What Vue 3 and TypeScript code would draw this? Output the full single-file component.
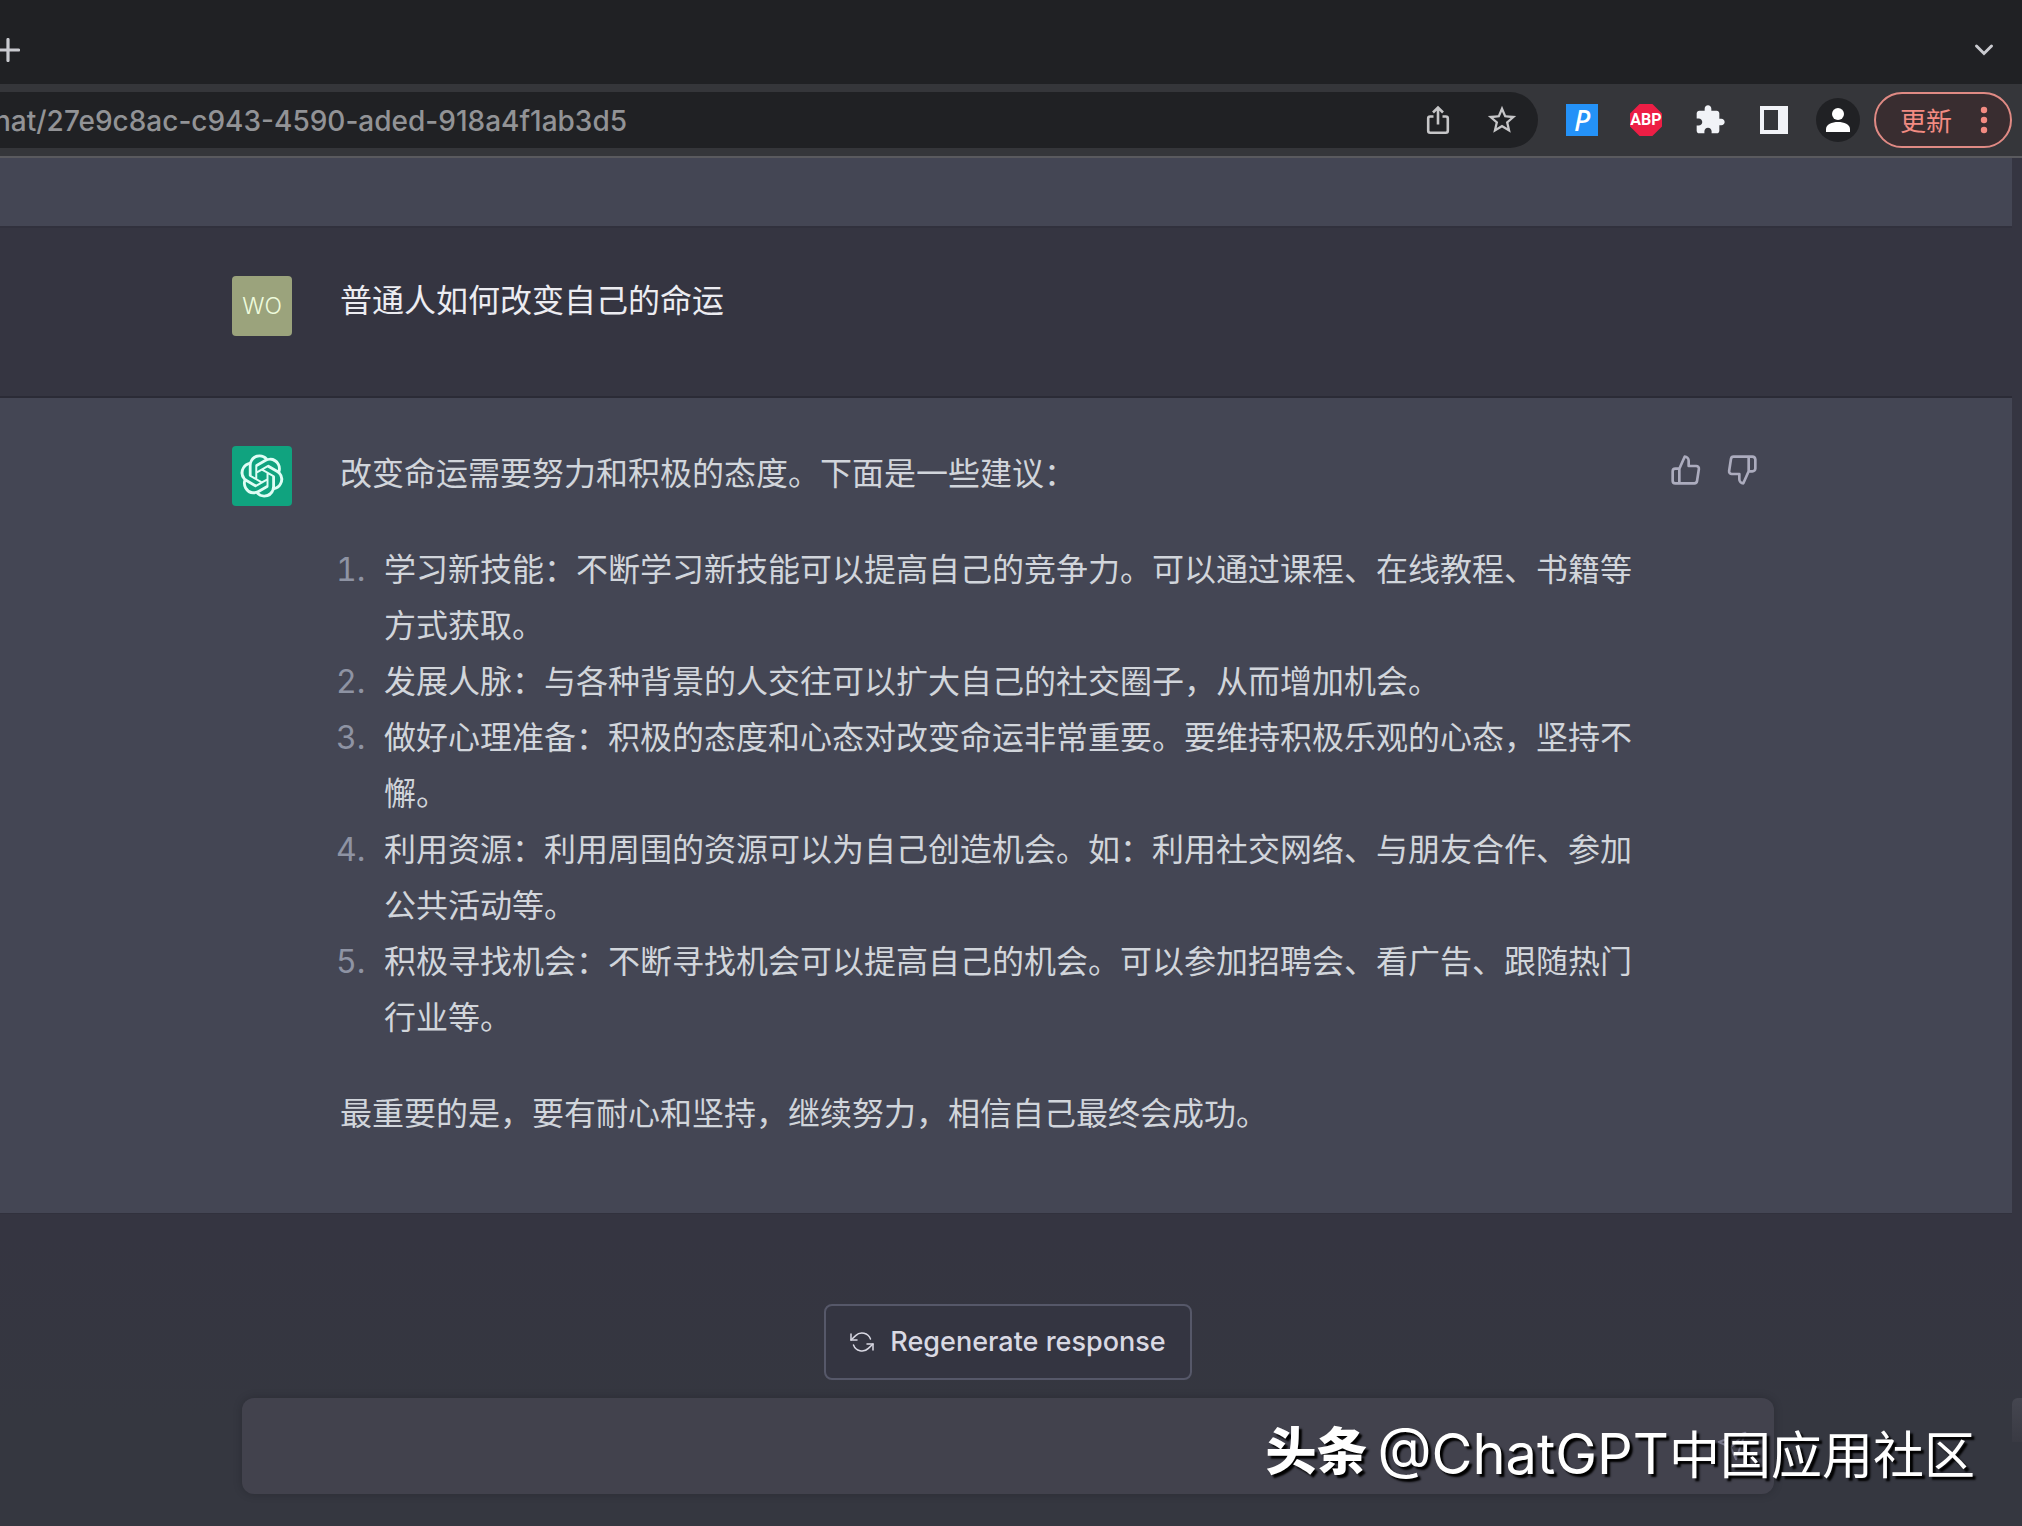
<script setup lang="ts">
import { ref } from 'vue'

interface Tip {
  id: number
  text: string
}

const url = ref('hat/27e9c8ac-c943-4590-aded-918a4f1ab3d5')
const draft = ref('')

const question = '普通人如何改变自己的命运'
const intro = '改变命运需要努力和积极的态度。下面是一些建议：'
const tips: Tip[] = [
  { id: 1, text: '学习新技能：不断学习新技能可以提高自己的竞争力。可以通过课程、在线教程、书籍等方式获取。' },
  { id: 2, text: '发展人脉：与各种背景的人交往可以扩大自己的社交圈子，从而增加机会。' },
  { id: 3, text: '做好心理准备：积极的态度和心态对改变命运非常重要。要维持积极乐观的心态，坚持不懈。' },
  { id: 4, text: '利用资源：利用周围的资源可以为自己创造机会。如：利用社交网络、与朋友合作、参加公共活动等。' },
  { id: 5, text: '积极寻找机会：不断寻找机会可以提高自己的机会。可以参加招聘会、看广告、跟随热门行业等。' },
]
const outro = '最重要的是，要有耐心和坚持，继续努力，相信自己最终会成功。'
</script>

<template>
  <div class="window">
    <header class="tabs">
      <button class="bare plus" aria-label="New tab">
        <svg width="24" height="24" viewBox="0 0 24 24"><path d="M12 1.5v21M1.500 12h21" stroke="#c9cacf" stroke-width="3.200" stroke-linecap="round" /></svg>
      </button>
      <button class="bare" aria-label="Search tabs">
        <svg width="20" height="14" viewBox="0 0 20 14"><path d="M2.500 3l7.500 7.500L17.500 3" fill="none" stroke="#c9cacf" stroke-width="3" stroke-linecap="round" /></svg>
      </button>
    </header>

    <nav class="toolbar">
      <div class="omnibox">
        <input v-model="url" class="url" aria-label="Address" spellcheck="false" />
        <button class="bare" aria-label="Share">
          <svg width="32" height="32" viewBox="0 0 32 32" fill="none" stroke="#c6c6c8" stroke-width="2.600">
            <path d="M11.500 12.500H8.200a2 2 0 0 0-2 2v12.300a2 2 0 0 0 2 2h15.600a2 2 0 0 0 2-2V14.500a2 2 0 0 0-2-2h-3.300M16 20.500V4M11 8.500l5-5 5 5" />
          </svg>
        </button>
        <button class="bare" aria-label="Bookmark">
          <svg width="34" height="34" viewBox="0 0 24 24" fill="#c6c6c8">
            <path d="M22 9.240l-7.190-.620L12 2 9.190 8.630 2 9.240l5.460 4.730L5.820 21 12 17.270 18.180 21l-1.630-7.030L22 9.240zM12 15.400l-3.760 2.270 1-4.280-3.320-2.880 4.380-.380L12 6.100l1.710 4.040 4.380.380-3.320 2.880 1 4.280L12 15.400z" />
          </svg>
        </button>
      </div>
      <div class="extensions">
        <button class="bare ext-p" aria-label="P extension">P</button>
        <button class="bare ext-abp" aria-label="Adblock Plus">ABP</button>
        <button class="bare" aria-label="Extensions">
          <svg width="32" height="32" viewBox="0 0 24 24" fill="#f1f3f7">
            <path d="M20.500 11H19V7c0-1.100-.900-2-2-2h-4V3.500C13 2.120 11.880 1 10.500 1S8 2.120 8 3.500V5H4c-1.100 0-1.990.900-1.990 2v3.800H3.500c1.490 0 2.700 1.210 2.700 2.700s-1.210 2.700-2.700 2.700H2V20c0 1.100.900 2 2 2h3.800v-1.500c0-1.490 1.210-2.700 2.700-2.700s2.700 1.210 2.700 2.700V22H17c1.100 0 2-.900 2-2v-4h1.500c1.380 0 2.500-1.120 2.500-2.500S21.880 11 20.500 11z" />
          </svg>
        </button>
        <button class="bare" aria-label="Side panel">
          <svg width="32" height="32" viewBox="0 0 32 32"><path d="M2 2h28v28H2zM6 6v20h14V6z" fill="#f1f3f7" fill-rule="evenodd" /></svg>
        </button>
      </div>
      <button class="bare profile" aria-label="Profile">
        <svg width="44" height="44" viewBox="0 0 44 44" fill="#fff">
          <circle cx="22" cy="16" r="6" />
          <path d="M10 34v-3c0-4.500 6-7 12-7s12 2.500 12 7v3z" />
        </svg>
      </button>
      <button class="update">
        更新
        <svg width="8" height="28" viewBox="0 0 8 28" fill="#f28b82"><circle cx="4" cy="4" r="3.200" /><circle cx="4" cy="14" r="3.200" /><circle cx="4" cy="24" r="3.200" /></svg>
      </button>
    </nav>

    <main class="page">
      <div class="scroller">
        <section class="previous"></section>

        <section class="row user">
          <div class="column">
            <div class="avatar me">WO</div>
            <p class="content">{{ question }}</p>
          </div>
        </section>

        <section class="row bot">
          <div class="column">
            <div class="avatar gpt">
              <svg width="44" height="44" viewBox="0 0 41 41" fill="none" stroke-width="1.500">
                <path d="M37.532 16.870a9.963 9.963 0 0 0-.856-8.184 10.078 10.078 0 0 0-10.855-4.835A9.964 9.964 0 0 0 18.306.500a10.079 10.079 0 0 0-9.614 6.977 9.967 9.967 0 0 0-6.664 4.834 10.080 10.080 0 0 0 1.240 11.817 9.965 9.965 0 0 0 .856 8.185 10.079 10.079 0 0 0 10.855 4.835 9.965 9.965 0 0 0 7.516 3.350 10.078 10.078 0 0 0 9.617-6.981 9.967 9.967 0 0 0 6.663-4.834 10.079 10.079 0 0 0-1.243-11.813zM22.498 37.886a7.474 7.474 0 0 1-4.799-1.735c.061-.033.168-.091.237-.134l7.964-4.600a1.294 1.294 0 0 0 .655-1.134V19.054l3.366 1.944a.120.120 0 0 1 .066.092v9.299a7.505 7.505 0 0 1-7.490 7.496zM6.392 31.006a7.471 7.471 0 0 1-.894-5.023c.060.036.162.099.237.141l7.964 4.600a1.297 1.297 0 0 0 1.308 0l9.724-5.614v3.888a.120.120 0 0 1-.048.103l-8.051 4.649a7.504 7.504 0 0 1-10.240-2.744zM4.297 13.620A7.469 7.469 0 0 1 8.200 10.333c0 .068-.004.190-.004.274v9.201a1.294 1.294 0 0 0 .654 1.132l9.723 5.614-3.366 1.944a.120.120 0 0 1-.114.010L7.040 23.856a7.504 7.504 0 0 1-2.743-10.237zm27.658 6.437l-9.724-5.615 3.367-1.943a.121.121 0 0 1 .113-.010l8.052 4.648a7.498 7.498 0 0 1-1.158 13.528v-9.476a1.293 1.293 0 0 0-.650-1.132zm3.350-5.043c-.059-.037-.162-.099-.236-.141l-7.965-4.600a1.298 1.298 0 0 0-1.308 0l-9.723 5.614v-3.888a.120.120 0 0 1 .048-.103l8.050-4.645a7.497 7.497 0 0 1 11.135 7.763zm-21.063 6.929l-3.367-1.944a.120.120 0 0 1-.065-.092v-9.299a7.497 7.497 0 0 1 12.293-5.756 6.940 6.940 0 0 0-.236.134l-7.965 4.600a1.294 1.294 0 0 0-.654 1.132l-.006 11.225zm1.829-3.943l4.330-2.501 4.332 2.500v5l-4.331 2.500-4.331-2.500V18z" fill="#dffdf5" />
              </svg>
            </div>
            <div class="content">
              <p>{{ intro }}</p>
              <ol>
                <li v-for="tip in tips" :key="tip.id">{{ tip.text }}</li>
              </ol>
              <p>{{ outro }}</p>
            </div>
            <div class="votes">
              <button class="bare" aria-label="Good response">
                <svg width="32" height="32" viewBox="0 0 24 24" class="thumb"><path d="M14 9V5a3 3 0 0 0-3-3l-4 9v11h11.280a2 2 0 0 0 2-1.700l1.380-9a2 2 0 0 0-2-2.300zM7 22H4a2 2 0 0 1-2-2v-7a2 2 0 0 1 2-2h3" /></svg>
              </button>
              <button class="bare" aria-label="Bad response">
                <svg width="32" height="32" viewBox="0 0 24 24" class="thumb"><path d="M10 15v4a3 3 0 0 0 3 3l4-9V2H5.720a2 2 0 0 0-2 1.700l-1.380 9a2 2 0 0 0 2 2.300zm7-13h2.670A2.310 2.310 0 0 1 22 4v7a2.310 2.310 0 0 1-2.330 2H17" /></svg>
              </button>
            </div>
          </div>
        </section>
      </div>

      <form class="composer" @submit.prevent>
        <button type="button" class="regenerate">
          <svg width="24" height="24" viewBox="0 0 24 24" fill="none" stroke="#d9d9e3" stroke-width="1.500" stroke-linecap="round" stroke-linejoin="round">
            <path d="M1 4v6h6M23 20v-6h-6" /><path d="M20.490 9A9 9 0 0 0 5.640 5.640L1 10m22 4l-4.640 4.360A9 9 0 0 1 3.510 15" />
          </svg>
          Regenerate response
        </button>
        <div class="prompt">
          <input v-model="draft" aria-label="Message" />
          <button class="bare" aria-label="Send">
            <svg width="32" height="32" viewBox="0 0 24 24" fill="none" stroke="#77778b" stroke-width="1.500" stroke-linejoin="round"><path d="M22 2L11 13M22 2l-7 20-4-9-9-4z" /></svg>
          </button>
        </div>
      </form>
      <div class="watermark"><strong>头条</strong><span><span class="handle">@ChatGPT</span>中国应用社区</span></div>
    </main>
  </div>
</template>

<style>
body {
  margin: 0;
  background: #353740;
}
</style>

<style scoped>
.window {
  display: flex;
  flex-direction: column;
  min-height: 100vh;
  overflow: hidden;
  font-family: Inter, "Noto Sans CJK SC", sans-serif;
  color: #d1d5db;
}
.bare {
  display: flex;
  align-items: center;
  justify-content: center;
  padding: 0;
  border: 0;
  background: none;
  font: inherit;
  color: inherit;
}
.tabs {
  display: flex;
  align-items: center;
  justify-content: space-between;
  height: 68px;
  padding: 16px 28px 0 0;
  background: #202124;
}
.plus {
  margin-left: -4px;
}
.toolbar {
  display: flex;
  align-items: center;
  height: 72px;
  padding-right: 10px;
  background: #35363a;
  border-bottom: 2px solid #5a5a5e;
}
.omnibox {
  display: flex;
  flex: 1;
  align-items: center;
  gap: 31px;
  height: 56px;
  padding-right: 19px;
  border-radius: 0 28px 28px 0;
  background: #202124;
}
.url {
  flex: 1;
  min-width: 0;
  margin-left: -6px;
  padding: 2px 0 0;
  border: 0;
  outline: 0;
  background: none;
  color: #929396;
  font: 500 28px/36px Inter, sans-serif;
}
.extensions {
  display: flex;
  align-items: center;
  gap: 32px;
  margin: 0 26px 0 28px;
}
.ext-p {
  width: 32px;
  height: 32px;
  background: #2492f8;
  color: #fff;
  font: italic 500 28px/32px "Noto Sans", sans-serif;
}
.ext-abp {
  width: 32px;
  height: 32px;
  clip-path: polygon(30% 0, 70% 0, 100% 30%, 100% 70%, 70% 100%, 30% 100%, 0 70%, 0 30%);
  background: #ed1e45;
  color: #fff;
  font: bold 16px/32px Roboto, sans-serif;
}
.profile {
  width: 44px;
  height: 44px;
  margin-right: 14px;
  border-radius: 50%;
  background: #202124;
}
.update {
  display: flex;
  align-items: center;
  justify-content: space-between;
  box-sizing: border-box;
  width: 138px;
  height: 56px;
  padding: 0 22px 0 24px;
  border: 2px solid #e08a84;
  border-radius: 28px;
  background: #392d30;
  color: #f28b82;
  font: 26px/32px "Noto Sans CJK SC", sans-serif;
}
.page {
  position: relative;
  display: flex;
  flex: 1;
  flex-direction: column;
  justify-content: space-between;
  background: linear-gradient(#353541 1080px, #353740 1260px);
}
/* end of the scrollbar thumb, fading into the composer */
.page::after {
  content: "";
  position: absolute;
  right: 0;
  bottom: 84px;
  width: 10px;
  height: 44px;
  border-radius: 6px 0 0 0;
  background: linear-gradient(#454650, #393a43);
}
.scroller {
  margin-right: 10px;
}
.previous {
  height: 68px;
  background: #444654;
  border-bottom: 2px solid #31313d;
}
.row {
  padding: 48px 0 0 4px;
  font-size: 32px;
  line-height: 56px;
}
.user {
  padding-bottom: 60px;
  border-bottom: 2px solid #2b2b36;
  color: #ececf1;
  line-height: 50px;
}
.bot {
  padding-bottom: 71px;
  border-bottom: 1px solid #31313d;
  background: #444654;
  color: #d1d5db;
}
.column {
  display: flex;
  max-width: 1552px;
  margin: 0 auto;
}
.avatar {
  display: flex;
  flex: none;
  align-items: center;
  justify-content: center;
  width: 60px;
  height: 60px;
  margin-right: 48px;
  border-radius: 4px;
}
.me {
  background: #9ba37c;
  color: #eefbdc;
  font-size: 23px;
  font-weight: 300;
}
.gpt {
  background: #10a37f;
}
.content {
  flex: 1;
  margin: 0;
}
.content p {
  margin: 0;
}
ol {
  margin: 40px 0 40px -4px;
  padding: 0;
}
li {
  display: flex;
  counter-increment: tip;
}
li::before {
  content: counter(tip) ".";
  flex: none;
  width: 48px;
  color: #8e93a3;
  font-variant-numeric: tabular-nums;
}
.votes {
  display: flex;
  gap: 24px;
  align-items: flex-start;
  padding: 8px 26px 0 36px;
}
.thumb {
  fill: none;
  stroke: #acacbe;
  stroke-width: 2;
  stroke-linecap: round;
  stroke-linejoin: round;
}
.composer {
  display: flex;
  flex-direction: column;
  align-items: center;
  gap: 18px;
  padding: 0 248px 32px 242px;
}
.regenerate {
  display: flex;
  align-items: center;
  gap: 16px;
  height: 76px;
  padding: 0 24px;
  border: 2px solid #565869;
  border-radius: 8px;
  background: #343541;
  color: #d9d9e3;
  font: 500 27px/40px Inter, sans-serif;
}
.prompt {
  display: flex;
  align-items: center;
  box-sizing: border-box;
  width: 100%;
  height: 96px;
  padding: 0 26px;
  border-radius: 12px;
  background: #42424d;
  box-shadow: 0 0 10px rgba(0, 0, 0, 0.2);
}
.prompt input {
  flex: 1;
  border: 0;
  outline: 0;
  background: none;
  color: #fff;
  font: 32px/48px Inter, sans-serif;
}
.watermark {
  position: absolute;
  right: 47px;
  bottom: 34px;
  display: flex;
  align-items: flex-start;
  gap: 10px;
  color: #fff;
  font-size: 51px;
  line-height: 72px;
  text-shadow: 3px 3px 2px #000;
  white-space: nowrap;
  pointer-events: none;
}
.watermark strong {
  font-weight: 900;
  line-height: 68px;
}
.handle {
  font-size: 56px;
}
</style>
